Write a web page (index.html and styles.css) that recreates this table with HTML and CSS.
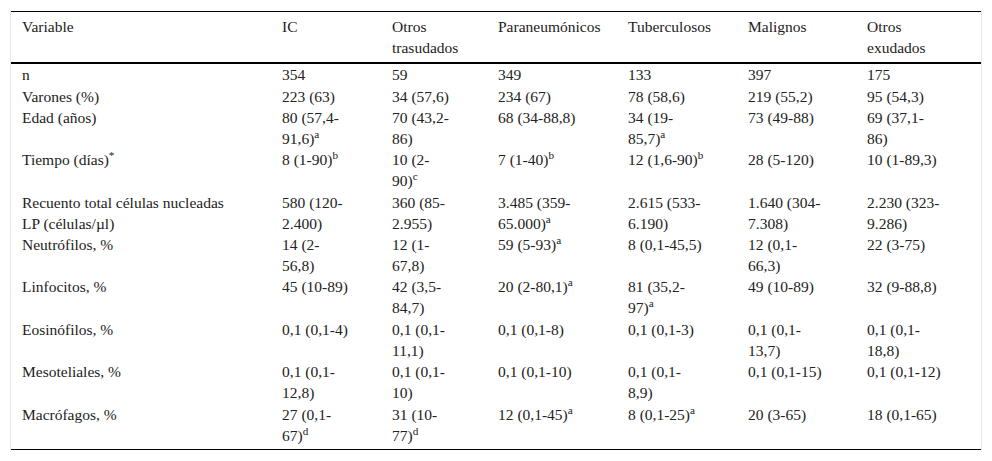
FILE: index.html
```html
<!DOCTYPE html>
<html lang="es">
<head>
<meta charset="utf-8">
<title>Tabla</title>
<link rel="stylesheet" href="styles.css">
</head>
<body>
<div class="wrap">
<table class="data">
<colgroup>
<col class="c1"><col class="c2"><col class="c3"><col class="c4"><col class="c5"><col class="c6"><col class="c7">
</colgroup>
<thead>
<tr><th>Variable</th><th>IC</th><th>Otros<br>trasudados</th><th>Paraneumónicos</th><th>Tuberculosos</th><th>Malignos</th><th>Otros<br>exudados</th></tr>
</thead>
<tbody>
<tr><td>n</td><td>354</td><td>59</td><td>349</td><td>133</td><td>397</td><td>175</td></tr>
<tr><td>Varones (%)</td><td>223 (63)</td><td>34 (57,6)</td><td>234 (67)</td><td>78 (58,6)</td><td>219 (55,2)</td><td>95 (54,3)</td></tr>
<tr><td>Edad (años)</td><td>80 (57,4-<br>91,6)<sup>a</sup></td><td>70 (43,2-<br>86)</td><td>68 (34-88,8)</td><td>34 (19-<br>85,7)<sup>a</sup></td><td>73 (49-88)</td><td>69 (37,1-<br>86)</td></tr>
<tr><td>Tiempo (días)<sup>*</sup></td><td>8 (1-90)<sup>b</sup></td><td>10 (2-<br>90)<sup>c</sup></td><td>7 (1-40)<sup>b</sup></td><td>12 (1,6-90)<sup>b</sup></td><td>28 (5-120)</td><td>10 (1-89,3)</td></tr>
<tr><td>Recuento total células nucleadas<br>LP (células/µl)</td><td>580 (120-<br>2.400)</td><td>360 (85-<br>2.955)</td><td>3.485 (359-<br>65.000)<sup>a</sup></td><td>2.615 (533-<br>6.190)</td><td>1.640 (304-<br>7.308)</td><td>2.230 (323-<br>9.286)</td></tr>
<tr><td>Neutrófilos, %</td><td>14 (2-<br>56,8)</td><td>12 (1-<br>67,8)</td><td>59 (5-93)<sup>a</sup></td><td>8 (0,1-45,5)</td><td>12 (0,1-<br>66,3)</td><td>22 (3-75)</td></tr>
<tr><td>Linfocitos, %</td><td>45 (10-89)</td><td>42 (3,5-<br>84,7)</td><td>20 (2-80,1)<sup>a</sup></td><td>81 (35,2-<br>97)<sup>a</sup></td><td>49 (10-89)</td><td>32 (9-88,8)</td></tr>
<tr><td>Eosinófilos, %</td><td>0,1 (0,1-4)</td><td>0,1 (0,1-<br>11,1)</td><td>0,1 (0,1-8)</td><td>0,1 (0,1-3)</td><td>0,1 (0,1-<br>13,7)</td><td>0,1 (0,1-<br>18,8)</td></tr>
<tr><td>Mesoteliales, %</td><td>0,1 (0,1-<br>12,8)</td><td>0,1 (0,1-<br>10)</td><td>0,1 (0,1-10)</td><td>0,1 (0,1-<br>8,9)</td><td>0,1 (0,1-15)</td><td>0,1 (0,1-12)</td></tr>
<tr class="last"><td>Macrófagos, %</td><td>27 (0,1-<br>67)<sup>d</sup></td><td>31 (10-<br>77)<sup>d</sup></td><td>12 (0,1-45)<sup>a</sup></td><td>8 (0,1-25)<sup>a</sup></td><td>20 (3-65)</td><td>18 (0,1-65)</td></tr>
</tbody>
</table>
</div>
</body>
</html>
```
FILE: styles.css
```css
html, body {
  margin: 0;
  padding: 0;
  background: #ffffff;
}

.wrap {
  margin: 10px 0 0 10px;
  width: 970px;
  padding-top: 1px;
  border-left: 1px solid #e6e6e6;
  border-right: 1px solid #e6e6e6;
}

.data {
  width: 970px;
  table-layout: fixed;
  border-collapse: separate;
  border-spacing: 0;
  font-family: "Liberation Serif", "DejaVu Serif", serif;
  font-size: 15.5px;
  line-height: 21px;
  color: #222222;
}

.c1 { width: 260px; }
.c2 { width: 110px; }
.c3 { width: 106px; }
.c4 { width: 130px; }
.c5 { width: 120px; }
.c6 { width: 119px; }
.c7 { width: 125px; }

.data th,
.data td {
  font-family: "Liberation Serif", "DejaVu Serif", serif;
  text-align: left;
  vertical-align: top;
  white-space: nowrap;
  padding: 0.2px 0 0.2px 11px;
  font-weight: normal;
}

.data th {
  padding-top: 4px;
  padding-bottom: 4px;
  border-top: 1px solid #000000;
  border-bottom: 2px solid #000000;
}

.data .last td {
  padding-bottom: 3.2px;
  border-bottom: 1px solid #000000;
}

.data sup {
  font-size: 0.72em;
  line-height: 0;
  vertical-align: super;
}
```
